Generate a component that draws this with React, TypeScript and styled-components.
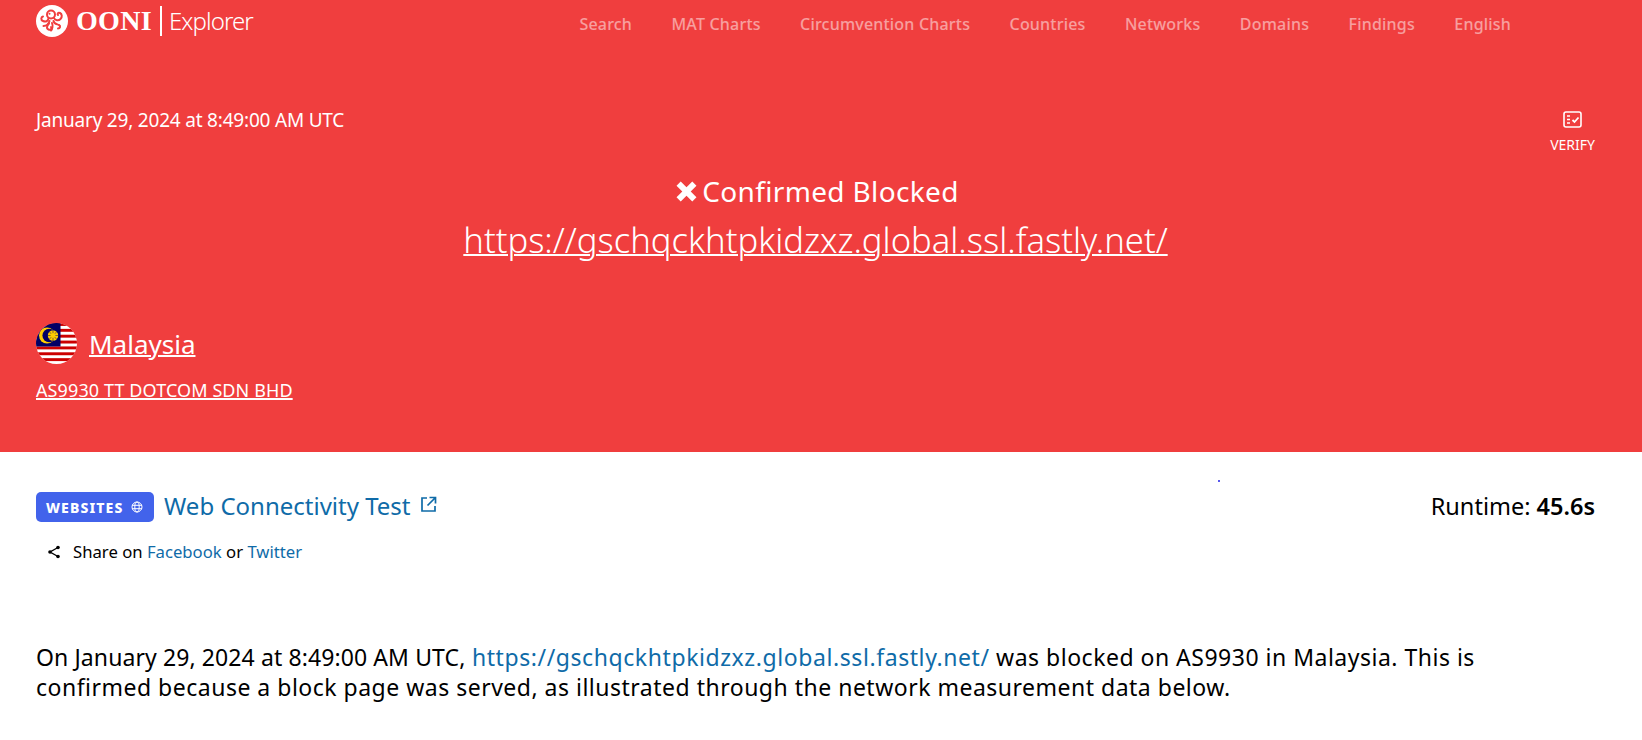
import React from "react";
import styled, { createGlobalStyle } from "styled-components";

const GlobalStyle = createGlobalStyle`
  html, body {
    margin: 0;
    padding: 0;
    background: #ffffff;
    color: #000000;
    font-family: "Noto Sans", "Open Sans", sans-serif;
  }
`;

const Hero = styled.header`
  background: #f03e3e;
  color: #ffffff;
  height: 452px;
  box-sizing: border-box;
  padding: 0 47px 0 36px;
  display: flex;
  flex-direction: column;
`;

const Nav = styled.nav`
  height: 48px;
  display: flex;
  align-items: center;
  justify-content: space-between;
`;

const Brand = styled.div`
  display: flex;
  align-items: center;
  height: 32px;
  margin-top: -6px;
`;

const BrandName = styled.span`
  font-family: "Liberation Serif", serif;
  font-weight: 700;
  font-size: 28px;
  margin-left: 8px;
  letter-spacing: 0.3px;
`;

const BrandProduct = styled.span`
  font-size: 24px;
  font-weight: 300;
  letter-spacing: -0.9px;
  border-left: 2px solid #ffffff;
  margin-left: 8px;
  padding-left: 7px;
  line-height: 30px;
`;

const NavLinks = styled.div`
  display: flex;
  gap: 39.4px;
  margin-right: 84px;
`;

const NavLink = styled.a`
  font-size: 16px;
  font-weight: 500;
  color: #ffffff;
  opacity: 0.5;
  letter-spacing: 0.2px;
`;

const MetaRow = styled.div`
  display: flex;
  justify-content: space-between;
  align-items: flex-start;
  margin-top: 60px;
`;

const DateText = styled.div`
  font-size: 19px;
  line-height: 24px;
  letter-spacing: -0.2px;
`;

const Verify = styled.div`
  display: flex;
  flex-direction: column;
  align-items: center;
  font-size: 14px;
  gap: 6px;
  margin-top: 3px;
`;

const Status = styled.div`
  display: flex;
  justify-content: center;
  align-items: center;
  gap: 5px;
  padding-left: 4px;
  font-size: 28px;
  line-height: 38px;
  letter-spacing: 0.35px;
  margin-top: 18px;
`;

const Target = styled.a`
  display: block;
  text-align: center;
  font-size: 34.6px;
  font-weight: 300;
  line-height: 46px;
  color: #ffffff;
  text-decoration: underline;
  text-decoration-thickness: 2px;
  margin-top: 7px;
`;

const Country = styled.div`
  display: flex;
  align-items: center;
  gap: 12px;
  margin-top: 60px;
`;

const CountryName = styled.a`
  font-size: 26px;
  line-height: 40px;
  color: #ffffff;
  text-decoration: underline;
  text-decoration-thickness: 2px;
`;

const Network = styled.a`
  font-size: 18px;
  line-height: 24px;
  letter-spacing: 0.1px;
  margin-top: 14px;
  color: #ffffff;
  text-decoration: underline;
  text-decoration-thickness: 2px;
  align-self: flex-start;
`;

const Main = styled.main`
  position: relative;
  padding: 0 47px 0 36px;
`;

const StrayDot = styled.span`
  position: absolute;
  left: 1218px;
  top: 28px;
  width: 2px;
  height: 2px;
  border-radius: 50%;
  background: #2020e8;
`;

const TestRow = styled.div`
  display: flex;
  justify-content: space-between;
  align-items: center;
  padding-top: 40px;
`;

const TestInfo = styled.div`
  display: flex;
  align-items: center;
`;

const Badge = styled.span`
  display: inline-flex;
  align-items: center;
  justify-content: space-between;
  box-sizing: border-box;
  width: 118px;
  height: 30px;
  padding: 0 11px 0 10px;
  border-radius: 5px;
  background: #4263eb;
  color: #ffffff;
  font-size: 14px;
  font-weight: 800;
  letter-spacing: 1.1px;
`;

const TestName = styled.a`
  font-size: 24px;
  line-height: 30px;
  color: #0f6ba8;
  margin-left: 10px;
  display: inline-flex;
  align-items: center;
  gap: 9px;
  position: relative;
  top: -1px;

  svg {
    margin-top: -4px;
  }
`;

const Runtime = styled.div`
  font-size: 23.5px;
  line-height: 30px;
  position: relative;
  top: -1px;
  b {
    font-weight: 600;
  }
`;

const Share = styled.div`
  display: flex;
  align-items: center;
  gap: 12px;
  margin: 18px 0 0 11px;
  font-size: 16.7px;
  a {
    color: #0f6ba8;
  }
`;

const Summary = styled.p`
  font-size: 23px;
  line-height: 30px;
  letter-spacing: 0.5px;
  max-width: 1500px;
  margin: 79px 0 0;
  a {
    color: #0f6ba8;
    letter-spacing: 0.58px;
  }
`;

const SummaryLead = styled.span`
  letter-spacing: 0.1px;
`;

const OoniMark = () => (
  <svg width="32" height="32" viewBox="0 0 32 32">
    <circle cx="16" cy="16" r="16" fill="#fff" />
    <g fill="none" stroke="#f03e3e" strokeWidth="2" strokeLinecap="round">
      <circle cx="15" cy="9.5" r="4" />
      <path d="M12.5 13.5c-.5 3-3 3.5-5.5 2.500s-2-4 0-4.500" />
      <path d="M18 13c1 2.500 4.500 3 6.500 1s1.500-5-.5-6-3 1-2 2" />
      <path d="M13.5 16c-1 3.500-4 5-6 5" />
      <path d="M17.5 16c.5 3 3.500 3 5.500 4s1 3.500-1 3.500" />
      <path d="M13 18.5c-2 2-3 5-.5 6s3.500-1 2.500-2.500" />
      <path d="M16 18c1 2.500.5 6-1 7.500" />
    </g>
    <circle cx="13.5" cy="8.8" r="1" fill="#f03e3e" />
  </svg>
);

const VerifyIcon = () => (
  <svg width="20" height="18" viewBox="0 0 20 18" fill="none" stroke="#fff">
    <rect x="1" y="1" width="17" height="15" rx="2" strokeWidth="1.6" />
    <path d="M4 5h3M4 8.5h3M4 12h3" strokeWidth="1.5" />
    <path d="M9.5 9l2 2 4-4.500" strokeWidth="1.8" />
  </svg>
);

const CrossIcon = () => (
  <svg width="21" height="21" viewBox="0 0 20 20">
    <path d="M.5 4.500L4.500.5 10 6l5.500-5.500 4 4L14 10l5.500 5.500-4 4L10 14l-5.500 5.500-4-4L6 10z" fill="#fff" />
  </svg>
);

const MalaysiaFlag = () => (
  <svg width="41" height="41" viewBox="0 0 41 41">
    <defs>
      <clipPath id="flagCircle">
        <circle cx="20.5" cy="20.5" r="20.5" />
      </clipPath>
    </defs>
    <g clipPath="url(#flagCircle)">
      <rect width="41" height="41" fill="#fff" />
      {[0, 1, 2, 3, 4, 5, 6].map((i) => (
        <rect key={i} y={i * 5.86} width="41" height="2.93" fill="#cc0001" />
      ))}
      <rect width="24.5" height="23.5" fill="#010066" />
      <circle cx="11" cy="12.5" r="8" fill="#ffcc00" />
      <circle cx="13.2" cy="12.5" r="6.8" fill="#010066" />
      <circle cx="17" cy="12.5" r="5.2" fill="#ffcc00" />
      <g stroke="#010066" strokeWidth="0.5">
        <path d="M17 6.500v12M11 12.500h12M12.800 8.300l8.400 8.400M21.200 8.300l-8.400 8.400" />
      </g>
      <circle cx="17" cy="12.5" r="2.4" fill="#ffcc00" />
    </g>
  </svg>
);

const GlobeIcon = () => (
  <svg width="12" height="12" viewBox="0 0 12 12" fill="none" stroke="#fff" strokeWidth="1">
    <circle cx="6" cy="6" r="5" />
    <ellipse cx="6" cy="6" rx="2.2" ry="5" />
    <path d="M1 4.3h10M1 7.7h10" />
  </svg>
);

const ExternalIcon = () => (
  <svg width="17" height="17" viewBox="0 0 17 17" fill="none" stroke="#0f6ba8" strokeWidth="1.7">
    <path d="M7 2H2v13h13v-5" />
    <path d="M9.5 1.500h6v6M15 2L7.500 9.500" />
  </svg>
);

const ShareIcon = () => (
  <svg width="14" height="14" viewBox="0 0 14 14">
    <path d="M11 2.500L3 7l8 4.500" fill="none" stroke="#000" strokeWidth="1.4" />
    <circle cx="11" cy="2.5" r="1.8" />
    <circle cx="3" cy="7" r="1.8" />
    <circle cx="11" cy="11.5" r="1.8" />
  </svg>
);

const navItems = ["Search", "MAT Charts", "Circumvention Charts", "Countries", "Networks", "Domains", "Findings", "English"];

const testUrl = "https://gschqckhtpkidzxz.global.ssl.fastly.net/";

export default function App() {
  return (
    <>
      <GlobalStyle />
      <Hero>
        <Nav>
          <Brand>
            <OoniMark />
            <BrandName>OONI</BrandName>
            <BrandProduct>Explorer</BrandProduct>
          </Brand>
          <NavLinks>
            {navItems.map((item) => (
              <NavLink key={item}>{item}</NavLink>
            ))}
          </NavLinks>
        </Nav>
        <MetaRow>
          <DateText>January 29, 2024 at 8:49:00 AM UTC</DateText>
          <Verify>
            <VerifyIcon />
            VERIFY
          </Verify>
        </MetaRow>
        <Status>
          <CrossIcon />
          Confirmed Blocked
        </Status>
        <Target href="#">{testUrl}</Target>
        <Country>
          <MalaysiaFlag />
          <CountryName href="#">Malaysia</CountryName>
        </Country>
        <Network href="#">AS9930 TT DOTCOM SDN BHD</Network>
      </Hero>
      <Main>
        <StrayDot />
        <TestRow>
          <TestInfo>
            <Badge>
              WEBSITES
              <GlobeIcon />
            </Badge>
            <TestName>
              Web Connectivity Test
              <ExternalIcon />
            </TestName>
          </TestInfo>
          <Runtime>
            Runtime: <b>45.6s</b>
          </Runtime>
        </TestRow>
        <Share>
          <ShareIcon />
          <span>
            Share on <a>Facebook</a> or <a>Twitter</a>
          </span>
        </Share>
        <Summary>
          <SummaryLead>On January 29, 2024 at 8:49:00 AM UTC,</SummaryLead> <a>{testUrl}</a> was blocked on AS9930 in
          Malaysia. This is confirmed because a block page was served, as illustrated through the network measurement
          data below.
        </Summary>
      </Main>
    </>
  );
}
